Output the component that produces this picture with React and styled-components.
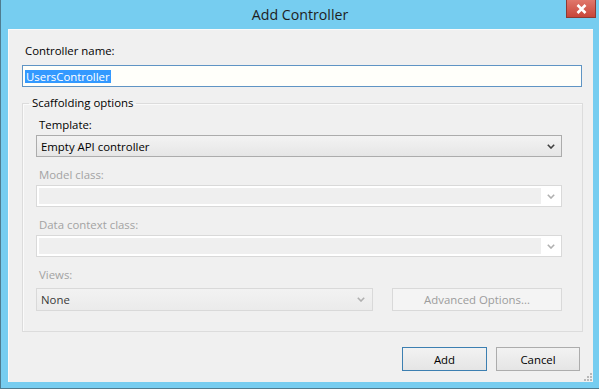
import React from "react"
import styled, { createGlobalStyle } from "styled-components"

const GlobalStyle = createGlobalStyle`
  html, body {
    margin: 0;
    padding: 0;
    background: #ffffff;
  }
  body {
    font-family: "Open Sans", "Noto Sans", "Liberation Sans", sans-serif;
    font-size: 11.4px;
    color: #000;
  }
`

const Window = styled.div`
  width: 599px;
  height: 389px;
  box-sizing: border-box;
  background: #76cdf0;
  border-left: 1px solid #4f7c90;
  border-bottom: 1px solid #4f7c90;
  display: flex;
  flex-direction: column;
`

const TitleBar = styled.div`
  height: 29px;
  flex: none;
  display: grid;
  grid-template-columns: 1fr auto 1fr;
  align-items: start;
`

const Title = styled.div`
  grid-column: 2;
  font-size: 14.2px;
  line-height: 30px;
  color: #1e1e1e;
`

const CloseButton = styled.div`
  grid-column: 3;
  justify-self: end;
  width: 30px;
  height: 18px;
  margin-right: 3px;
  box-sizing: border-box;
  border: 1px solid #8e3a33;
  border-top: none;
  background: linear-gradient(#e0776b, #c8463a);
  display: flex;
  align-items: center;
  justify-content: center;
`

const Content = styled.div`
  flex: 1;
  margin: 0 6px 6px 7px;
  background: #f0f0f0;
  box-shadow: inset 1px 1px 0 #fafafa;
  padding: 14px 10px 0 14px;
  display: flex;
  flex-direction: column;
  position: relative;
`

const Label = styled.div`
  line-height: 16px;
  height: 16px;
  padding-left: ${({ $indent }) => $indent || 0}px;
  color: ${({ $disabled }) => ($disabled ? "#a3a3a3" : "#000")};
  white-space: nowrap;
`

const NameInput = styled.div`
  margin: 6px 1px 0 0;
  height: 22px;
  box-sizing: border-box;
  border: 1px solid #5f94c4;
  background: #fffffa;
  display: flex;
  align-items: center;
  padding-left: 2px;
`

const Selection = styled.span`
  background: #3399ff;
  color: #fff;
  line-height: 13px;
  padding: 0 1px;
`

const GroupBox = styled.fieldset`
  margin: 8px 0 0 0;
  padding: 6px 20px 20px 13px;
  border: 1px solid #dcdcdc;
  box-shadow: inset 1px 1px 0 #fafafa;
  display: flex;
  flex-direction: column;
  min-width: 0;
`

const Legend = styled.legend`
  padding: 0 3px;
  margin-left: -7px;
  line-height: 16px;
`

const Field = styled.div`
  display: flex;
  flex-direction: column;
  gap: ${({ $gap }) => $gap || 2}px;
  margin-top: ${({ $top }) => $top || 0}px;
`

const ComboBox = styled.div`
  height: 22px;
  box-sizing: border-box;
  border: 1px solid #acacac;
  background: linear-gradient(#f3f3f3, #e6e6e6);
  display: flex;
  align-items: center;
  justify-content: space-between;
  padding: 0 6px 0 4px;
`

const DisabledCombo = styled.div`
  height: 22px;
  box-sizing: border-box;
  border: 1px solid #d9d9d9;
  background: #fff;
  padding: 2px 0 2px 2px;
  display: grid;
  grid-template-columns: 1fr 20px;
`

const DisabledFill = styled.div`
  background: #efefef;
`

const ArrowCell = styled.div`
  display: flex;
  align-items: center;
  justify-content: center;
`

const BottomRow = styled.div`
  display: grid;
  grid-template-columns: 337px 1fr;
  gap: 19px;
`

const ViewsCombo = styled.div`
  height: 23px;
  box-sizing: border-box;
  border: 1px solid #d9d9d9;
  background: linear-gradient(#f2f2f2, #ebebeb);
  color: #3a3a3a;
  display: flex;
  align-items: center;
  justify-content: space-between;
  padding: 0 7px 0 4px;
`

const Button = styled.div`
  height: ${({ $h }) => $h || 24}px;
  width: ${({ $w }) => ($w ? `${$w}px` : "auto")};
  box-sizing: border-box;
  border: 1px solid ${({ $variant }) =>
    $variant === "default" ? "#3c7fb1" : $variant === "disabled" ? "#d9d9d9" : "#acacac"};
  background: ${({ $variant }) =>
    $variant === "disabled" ? "#f4f4f4" : "linear-gradient(#f2f2f2, #e5e5e5)"};
  color: ${({ $variant }) => ($variant === "disabled" ? "#9c9c9c" : "#000")};
  display: flex;
  align-items: center;
  justify-content: center;
  white-space: nowrap;
`

const Actions = styled.div`
  display: flex;
  justify-content: flex-end;
  gap: 9px;
  margin-top: 15px;
  padding-right: 3px;
`

const Grip = styled.svg`
  position: absolute;
  right: 1px;
  bottom: 1px;
`

const Chevron = ({ color = "#404040" }) => (
  <svg width="8" height="5" viewBox="0 0 8 5">
    <polyline points="0.8,0.8 4,4 7.2,0.8" fill="none" stroke={color} strokeWidth="1.6" />
  </svg>
)

const DisabledSelect = () => (
  <DisabledCombo>
    <DisabledFill />
    <ArrowCell>
      <Chevron color="#b0b0b0" />
    </ArrowCell>
  </DisabledCombo>
)

export default function App() {
  return (
    <>
      <GlobalStyle />
      <Window>
        <TitleBar>
          <Title>Add Controller</Title>
          <CloseButton>
            <svg width="11" height="10" viewBox="0 0 11 10">
              <path d="M1.5 1 L9.5 9 M9.5 1 L1.5 9" stroke="#fff" strokeWidth="2.6" />
            </svg>
          </CloseButton>
        </TitleBar>
        <Content>
          <Label $indent={3}>Controller name:</Label>
          <NameInput>
            <Selection>UsersController</Selection>
          </NameInput>
          <GroupBox>
            <Legend>Scaffolding options</Legend>
            <Field>
              <Label $indent={3}>Template:</Label>
              <ComboBox>
                <span>Empty API controller</span>
                <Chevron />
              </ComboBox>
            </Field>
            <Field $top={10}>
              <Label $indent={3} $disabled>Model class:</Label>
              <DisabledSelect />
            </Field>
            <Field $top={10}>
              <Label $indent={3} $disabled>Data context class:</Label>
              <DisabledSelect />
            </Field>
            <Field $top={10} $gap={5}>
              <Label $indent={3} $disabled>Views:</Label>
              <BottomRow>
                <ViewsCombo>
                  <span>None</span>
                  <Chevron color="#b0b0b0" />
                </ViewsCombo>
                <Button $variant="disabled" $h={23}>Advanced Options...</Button>
              </BottomRow>
            </Field>
          </GroupBox>
          <Actions>
            <Button $variant="default" $w={85}>Add</Button>
            <Button $w={84}>Cancel</Button>
          </Actions>
          <Grip width="8" height="8" viewBox="0 0 8 8">
            {[[6, 0], [6, 3], [3, 3], [6, 6], [3, 6], [0, 6]].map(([x, y], i) => (
              <rect key={i} x={x} y={y} width="2" height="2" fill="#b8b8b8" />
            ))}
          </Grip>
        </Content>
      </Window>
    </>
  )
}
